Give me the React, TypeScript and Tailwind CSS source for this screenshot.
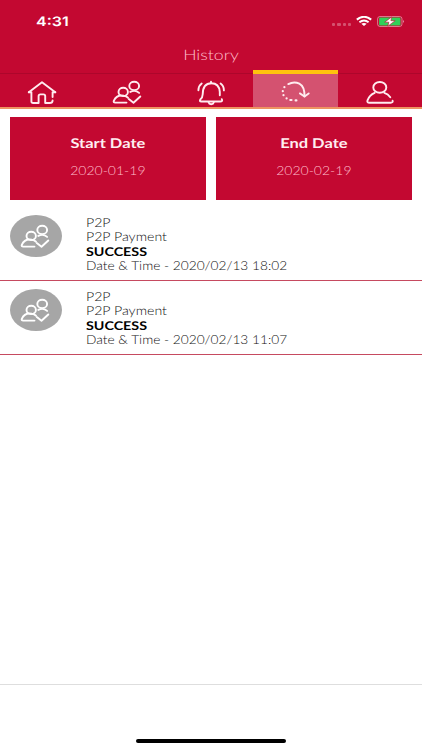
import type { ReactNode } from 'react';

interface Transaction {
  id: number;
  type: string;
  description: string;
  status: string;
  date: string;
}

const transactions: Transaction[] = [
  { id: 1, type: 'P2P', description: 'P2P Payment', status: 'SUCCESS', date: '2020/02/13 18:02' },
  { id: 2, type: 'P2P', description: 'P2P Payment', status: 'SUCCESS', date: '2020/02/13 11:07' },
];

interface IconProps {
  children: ReactNode;
  className?: string;
}

const Icon = ({ children, className = 'w-8 h-7' }: IconProps) => (
  <svg
    viewBox="0 0 32 28"
    className={className}
    fill="none"
    stroke="currentColor"
    strokeWidth="1.9"
    strokeLinecap="round"
    strokeLinejoin="round"
  >
    {children}
  </svg>
);

const HomeIcon = () => (
  <Icon>
    <path d="M2.8 13.2 16 3.2l13.3 10" />
    <path d="M2.8 13.2h2.6v9.3q0 1.5 1.8 1.5h5.4v-7q0-1.6 1.8-1.6h3q1.8 0 1.8 1.6v7h4.4q3 0 3-2.6M26.6 18v-4.8h2.7" />
  </Icon>
);

const PeopleIcon = ({ className }: { className?: string }) => (
  <Icon className={className}>
    <ellipse cx="23.2" cy="6.9" rx="4.9" ry="4.2" />
    <ellipse cx="12.2" cy="12.9" rx="4.7" ry="4.1" />
    <path d="M19.3 12.9q5-2.4 8.8 1" />
    <path d="M15.5 23.6H4.2q-2 0-1.4-1.7 2.8-6.4 10-5.1 2.6.4 4.2 1.9" />
    <path d="m17.8 20 4.7 3.8 6.8-6.3" />
  </Icon>
);

const BellIcon = () => (
  <Icon>
    <path d="M16 2.8v1.4" />
    <path d="M26.8 20.2q1.2 2.3-1.6 2.3H6.4q-2.4 0-1-2.1 2.2-2 2.3-5.2.1-11 8.6-11 7.8 0 8.5 8.6v3.5" />
    <path d="M13.6 23.4q.4 1.8 2.6 1.8t2.6-1.8" />
    <path d="M6.7 4.6Q3.4 7 3.4 11.2M25.6 4.6q3.3 2.4 3.3 6.8" />
  </Icon>
);

const HistoryIcon = () => (
  <Icon>
    <path d="M9.3 5.1Q15 2 20.3 4.7q5.4 2.8 5.2 12.7" />
    <path d="m20.9 14.4 4.6 3.1 4.2-3.1" />
    <path d="M5.4 8.1v.1M3.8 12.1v.1M4.5 16.1v.1M7.6 19.3v.1M11.3 21h1.2M16.6 21.4h.8" strokeWidth="2.2" />
  </Icon>
);

const UserIcon = () => (
  <Icon>
    <ellipse cx="15.8" cy="8.4" rx="6.5" ry="5.4" />
    <path d="M10.7 13.9Q5.4 16 3.5 21.4q-.8 2.3 2 2.3h21.2q2.5 0 1.9-2M20.3 13.8q3.8 1.1 6 4.4" />
  </Icon>
);

const StatusBar = () => (
  <div className="h-10 flex items-center justify-between pl-[36px] pr-[17px] text-white">
    <span className="font-['Inter'] text-[13px] font-semibold leading-4 origin-left scale-x-[1.23] mt-[3px]">4:31</span>
    <div className="flex items-center mt-0.5">
      <div className="flex gap-[2px] mr-[5px] mt-[6px]">
        {[0, 1, 2, 3].map((dot) => (
          <span key={dot} className="w-[3.2px] h-[3px] rounded-[1px] bg-white/30" />
        ))}
      </div>
      <svg viewBox="0 0 16 10" className="w-4 h-[10px] mr-[5px]" fill="none" stroke="white" strokeWidth="2">
        <path d="M.8 3.6Q8-2 15.2 3.6M3.4 6.3q4.6-3.5 9.2 0" />
        <path d="M5.3 7.8Q8 6 10.7 7.8L8 10Z" fill="white" stroke="none" />
      </svg>
      <svg viewBox="0 0 28 11" className="w-7 h-[11px]" fill="none">
        <rect x=".6" y=".5" width="24.4" height="10" rx="2.4" stroke="white" strokeOpacity=".45" />
        <rect x="2.1" y="1.6" width="21.4" height="7.9" rx="1.2" fill="#30d158" />
        <path d="M26 4q2.2 1.4 0 2.8Z" fill="white" fillOpacity=".5" />
        <path d="m14.7.9-7 5.3h4.1l-.9 4 7.2-5.5h-4.2Z" fill="white" stroke="#c30831" strokeWidth=".6" />
      </svg>
    </div>
  </div>
);

const tabs = [
  { name: 'home', icon: <HomeIcon /> },
  { name: 'p2p', icon: <PeopleIcon /> },
  { name: 'alerts', icon: <BellIcon /> },
  { name: 'history', icon: <HistoryIcon /> },
  { name: 'profile', icon: <UserIcon /> },
];

const TabBar = ({ active }: { active: string }) => (
  <nav className="h-[37px] grid grid-cols-5 items-end text-[#ffecef]">
    {tabs.map((tab) => (
      <div
        key={tab.name}
        className={
          tab.name === active
            ? 'h-[37px] flex justify-center border-t-4 border-[#ffc20e] bg-[#d45270] pt-[5px]'
            : 'h-[34px] flex justify-center border-t border-[#ad062b] pt-[5px]'
        }
      >
        {tab.icon}
      </div>
    ))}
  </nav>
);

const DateCard = ({ label, value }: { label: string; value: string }) => (
  <div className="h-[83px] flex-1 bg-[#c30831] text-center pt-[18px]">
    <p className="text-[13.5px] leading-4 font-bold text-[#ffeef1] scale-x-[1.22]">{label}</p>
    <p className="text-[12.5px] leading-4 font-light text-[#ffbfcb] scale-x-[1.12] mt-3">{value}</p>
  </div>
);

const TransactionRow = ({ transaction }: { transaction: Transaction }) => (
  <li className="h-[74px] flex items-start border-b border-[#c64a60] pl-[10px]">
    <div className="w-[52px] h-[42px] mt-2 rounded-[50%] bg-[#a6a6a6] flex items-center justify-center text-white">
      <PeopleIcon className="w-8 h-7 mr-[2px] mt-px" />
    </div>
    <div className="ml-6 mt-[9px] text-[12.5px] leading-[14.3px] font-light text-[#111] whitespace-nowrap">
      <p className="origin-left scale-x-[1.13]">{transaction.type}</p>
      <p className="origin-left scale-x-[1.13]">{transaction.description}</p>
      <p className="origin-left scale-x-[1.19] text-[12px] font-bold text-black">{transaction.status}</p>
      <p className="origin-left scale-x-[1.096]">Date &amp; Time - {transaction.date}</p>
    </div>
  </li>
);

const App = () => {
  return (
    <div className="w-[422px] h-[750px] flex flex-col bg-white overflow-hidden font-['Lato',sans-serif] [text-rendering:geometricPrecision]">
      <header className="bg-[#c30831] border-b-2 border-[#ee9461]">
        <StatusBar />
        <h1 className="h-[30px] text-center text-[14.5px] leading-[32px] font-light text-[#ffbdc9] scale-x-[1.22]">History</h1>
        <TabBar active="history" />
      </header>
      <main className="flex-1">
        <div className="flex gap-[10px] pl-[10px] pr-[10.5px] pt-2 pb-[7px]">
          <DateCard label="Start Date" value="2020-01-19" />
          <DateCard label="End Date" value="2020-02-19" />
        </div>
        <ul>
          {transactions.map((transaction) => (
            <TransactionRow key={transaction.id} transaction={transaction} />
          ))}
        </ul>
      </main>
      <footer className="h-[66px] border-t border-[#dedede] flex justify-center items-end pb-[7px]">
        <div className="w-[150px] h-1 rounded-full bg-black" />
      </footer>
    </div>
  );
};

export default App;
